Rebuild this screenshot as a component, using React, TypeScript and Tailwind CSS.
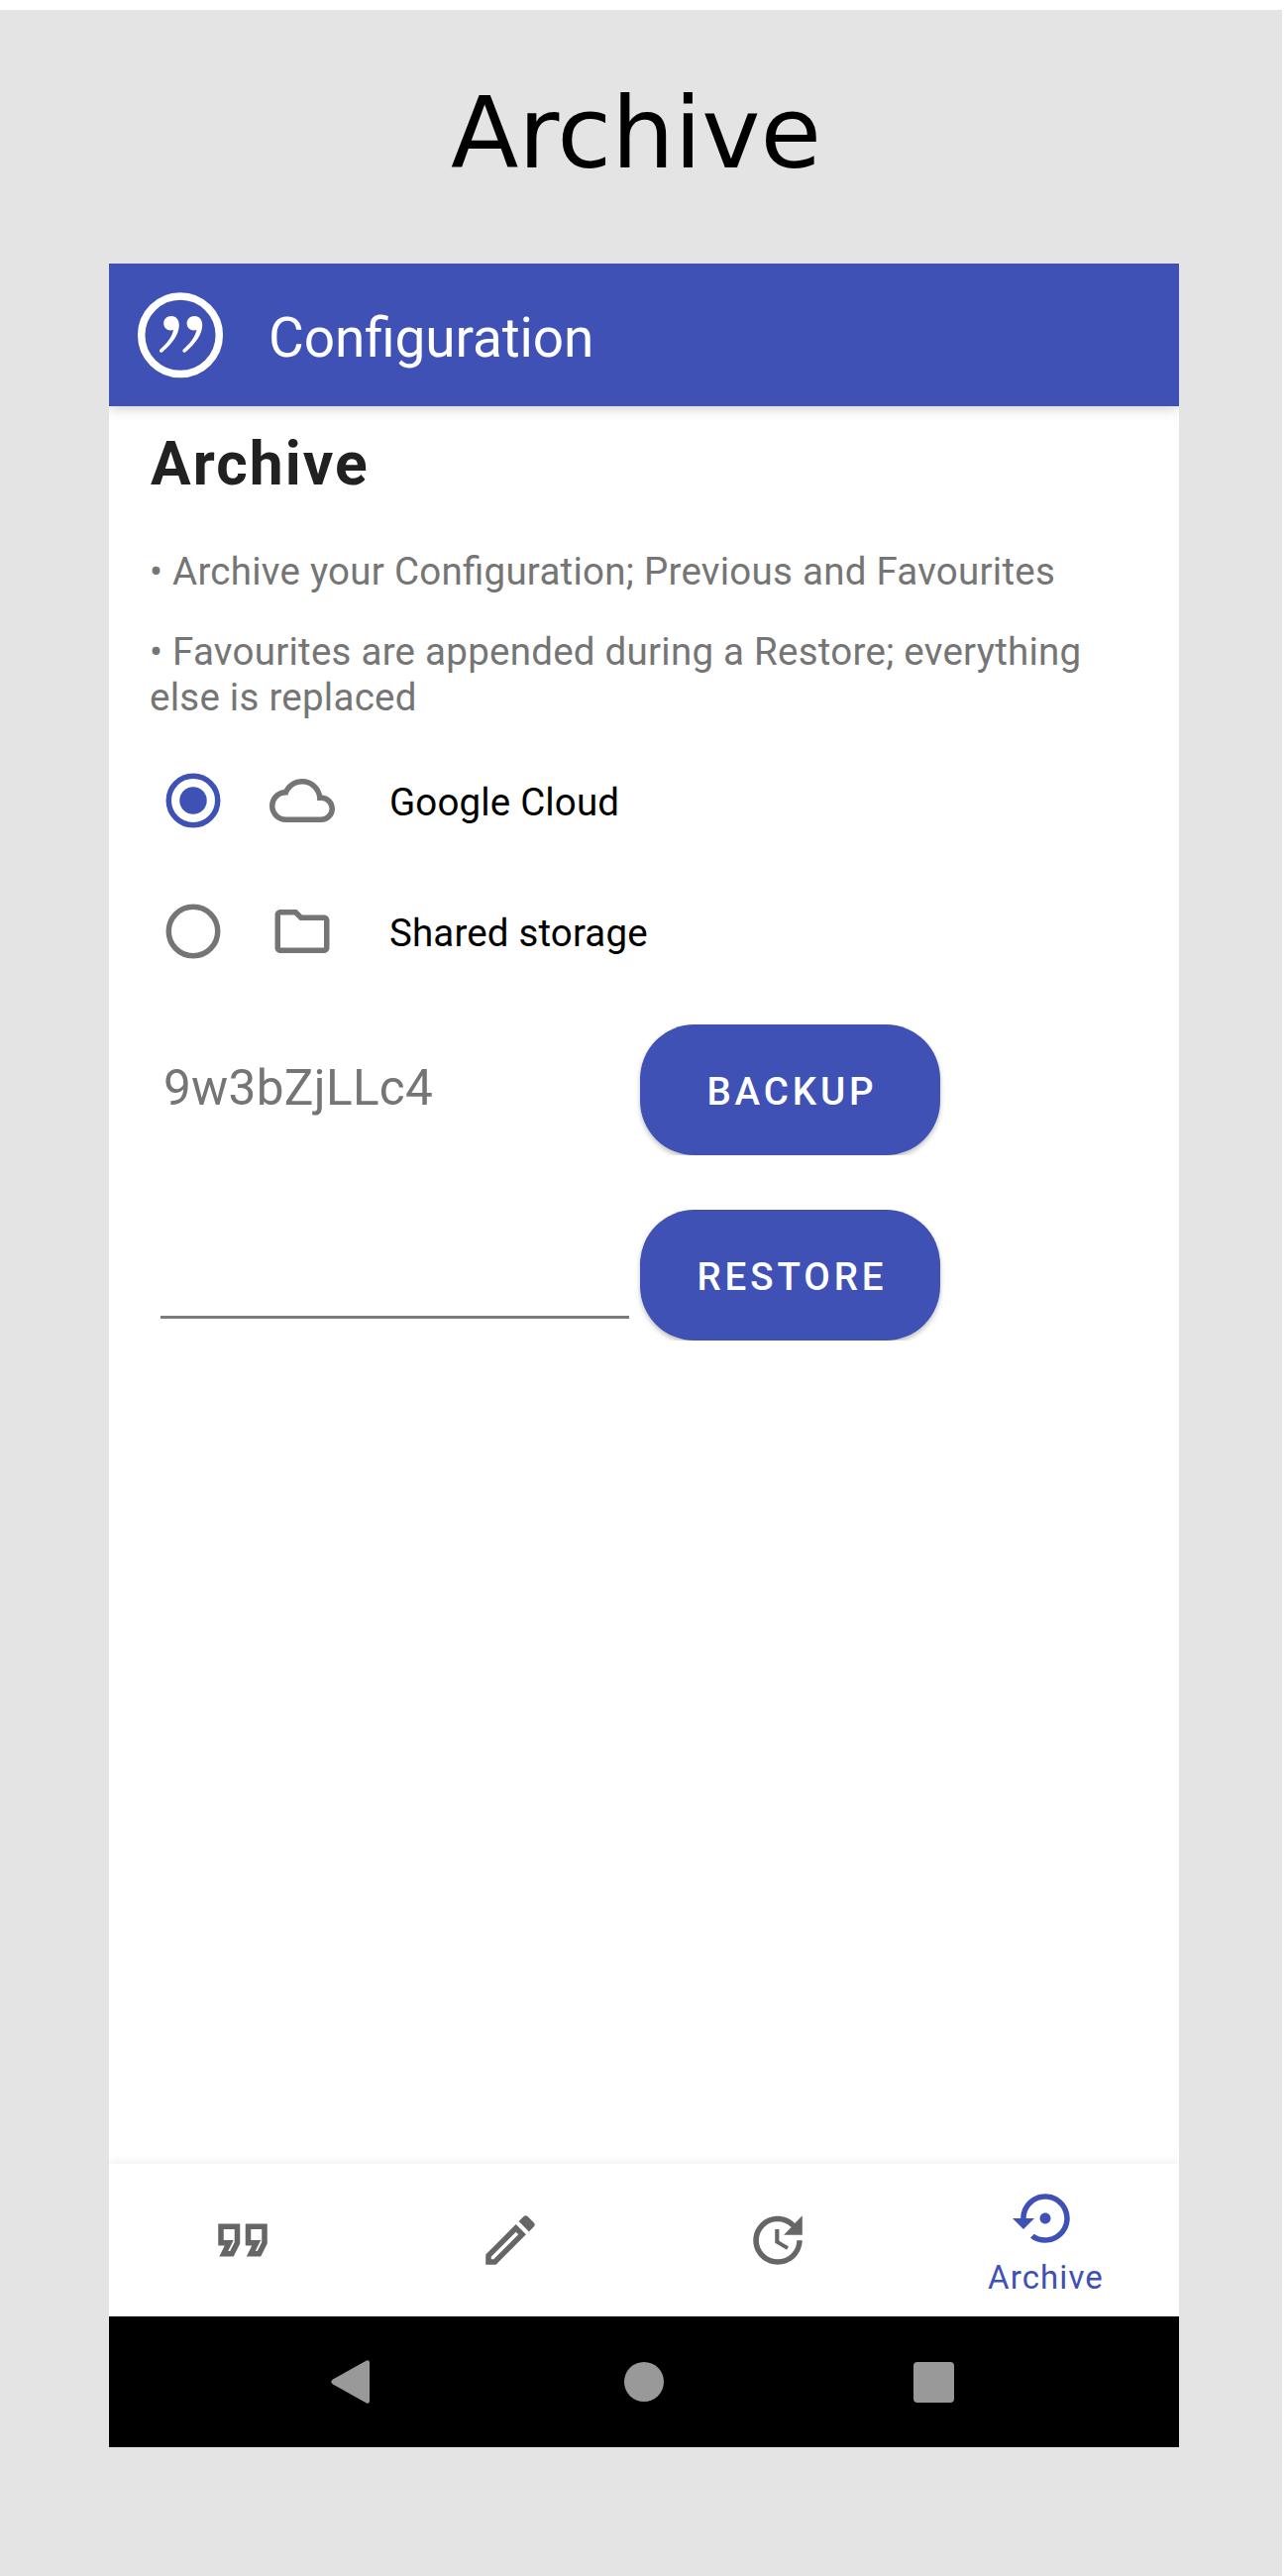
import React from "react";

const PATHS = {
  cloud:
    "M19,18H6A4,4 0 0,1 2,14A4,4 0 0,1 6,10H6.71C7.37,7.69 9.5,6 12,6A5.5,5.5 0 0,1 17.5,11.5V12H19A3,3 0 0,1 22,15A3,3 0 0,1 19,18M19.35,10.03C18.67,6.59 15.64,4 12,4C9.11,4 6.6,5.64 5.35,8.03C2.34,8.36 0,10.9 0,14A6,6 0 0,0 6,20H19A5,5 0 0,0 24,15C24,12.36 21.95,10.22 19.35,10.03Z",
  folder:
    "M9.17 6l2 2H20v10H4V6h5.17M10 4H4c-1.1 0-1.99.9-1.99 2L2 18c0 1.1.9 2 2 2h16c1.1 0 2-.9 2-2V8c0-1.1-.9-2-2-2h-8l-2-2z",
  quote:
    "M18.62 18h-5.24l2-4H13V6h8v7.24L18.62 18zm-2-2h.76L19 12.76V8h-4v4h3.62l-2 4zm-8 2H3.38l2-4H3V6h8v7.24L8.62 18zm-2-2h.76L9 12.76V8H5v4h3.62l-2 4z",
  pencil:
    "M14.06,9L15,9.94L5.92,19H5V18.08L14.06,9M17.66,3C17.41,3 17.15,3.1 16.96,3.29L15.13,5.12L18.88,8.87L20.71,7.04C21.1,6.65 21.1,6 20.71,5.63L18.37,3.29C18.17,3.09 17.92,3 17.66,3M14.06,6.19L3,17.25V21H6.75L17.81,9.94L14.06,6.19Z",
  update:
    "M21,10.12H14.22L16.96,7.3C14.23,4.6 9.81,4.5 7.08,7.2C4.35,9.91 4.35,14.28 7.08,17C9.81,19.7 14.23,19.7 16.96,17C18.32,15.65 19,14.08 19,12.1H21C21,14.08 20.12,16.65 18.36,18.39C14.85,21.87 9.15,21.87 5.64,18.39C2.14,14.92 2.11,9.28 5.62,5.81C9.13,2.34 14.76,2.34 18.27,5.81L21,3V10.12M12.5,8V12.25L16,14.33L15.28,15.54L11,13V8H12.5Z",
  restore:
    "M14 12c0-1.1-.9-2-2-2s-2 .9-2 2 .9 2 2 2 2-.9 2-2zm-2-9c-4.97 0-9 4.03-9 9H0l4 4 4-4H5c0-3.87 3.13-7 7-7s7 3.13 7 7-3.13 7-7 7c-1.51 0-2.91-.49-4.06-1.3l-1.42 1.44C8.04 20.3 9.94 21 12 21c4.97 0 9-4.03 9-9s-4.03-9-9-9z",
};

function Icon({ name }: { name: keyof typeof PATHS }) {
  return (
    <svg viewBox="0 0 24 24" className="h-[66px] w-[66px] shrink-0" fill="currentColor" fillRule="evenodd">
      <path d={PATHS[name]} />
    </svg>
  );
}

const QUOTE_MARK =
  "M36 26C41 26 43.800 30 43.800 35C43.800 44 37 54 27 62.200C25 63.700 22.800 61.500 24.500 59.800C31 54 36.500 47.500 38 40C33 41.800 28.200 38.500 28.200 33.500C28.200 29 31.500 26 36 26Z";

function Logo() {
  return (
    <svg viewBox="0 0 90 90" className="h-[90px] w-[90px] shrink-0 blur-[0.7px]" fill="#fff">
      <circle cx="45" cy="45.300" r="39.300" fill="none" stroke="#fff" strokeWidth="7.500" />
      <path d={QUOTE_MARK} />
      <path d={QUOTE_MARK} transform="translate(23.400 0)" />
    </svg>
  );
}

function Radio({ checked }: { checked?: boolean }) {
  return (
    <svg
      viewBox="0 0 24 24"
      className={checked ? "h-[66px] w-[66px] shrink-0 text-[#3f51b5]" : "h-[66px] w-[66px] shrink-0 text-[#757575]"}
    >
      <circle cx="12" cy="12" r="9" fill="none" stroke="currentColor" strokeWidth="2" />
      {checked && <circle cx="12" cy="12" r="5" fill="currentColor" />}
    </svg>
  );
}

function Choice({ checked, icon, label }: { checked?: boolean; icon: "cloud" | "folder"; label: string }) {
  return (
    <div className="flex h-[132px] items-center pl-[52px]">
      <Radio checked={checked} />
      <div className="ml-[44px] text-[#757575]">
        <Icon name={icon} />
      </div>
      <span className="ml-[55px] pt-[3px] text-[38.500px] leading-[46px] tracking-[0.150px] text-black">{label}</span>
    </div>
  );
}

function Action({ label }: { label: string }) {
  return (
    <div className="-mx-2 overflow-hidden px-2">
      <button className="block h-[132px] w-[303px] rounded-[55px] bg-[#3f51b5] pt-[3px] pl-[4px] text-[38.500px] font-medium tracking-[3.900px] text-white shadow-[0_3px_5px_rgba(0,0,0,0.24)]">
        {label}
      </button>
    </div>
  );
}

export default function App() {
  return (
    <div className="h-[2600px] w-[1300px] bg-white pt-[10px] pr-[6px]">
      <div className="flex h-[2590px] flex-col bg-[#e4e4e4] pl-[110px]">
        <h1 className="flex h-[256px] w-[1064px] items-start justify-center pt-[67px] font-['DejaVu_Sans',sans-serif] text-[100px] leading-[116px] text-black">
          Archive
        </h1>
        <div className="flex h-[2204px] w-[1080px] flex-col overflow-hidden bg-white font-[Roboto,sans-serif] [font-feature-settings:'liga'_1]">
          <header className="relative flex h-[144px] shrink-0 items-start bg-[#3f51b5] pt-[27px] pl-[27px] text-white shadow-[0_2px_13px_rgba(0,0,0,0.2)]">
            <Logo />
            <span className="ml-[44px] pt-[16px] text-[55px] leading-[64px] tracking-[-0.120px]">Configuration</span>
          </header>
          <main className="flex-1">
            <h2 className="pt-[23px] pl-[42px] text-[60.500px] leading-[72px] font-bold tracking-[2px] text-[#212121]">
              Archive
            </h2>
            <div className="pl-[41px] text-[38.500px] leading-[46px] tracking-[0.250px] text-[#757575]">
              <p className="pt-[49px]">• Archive your Configuration; Previous and Favourites</p>
              <p className="w-[1000px] pt-[35px]">
                • Favourites are appended during a Restore; everything
                <br />
                else is replaced
              </p>
            </div>
            <div className="pt-[15px]">
              <Choice checked icon="cloud" label="Google Cloud" />
              <Choice icon="folder" label="Shared storage" />
            </div>
            <div className="mt-[28px] flex h-[187px] items-start">
              <div className="w-[536px] pt-[35px] pl-[55px] text-[49.500px] leading-[58px] tracking-[0.300px] text-[#757575]">
                9w3bZjLLc4
              </div>
              <Action label="BACKUP" />
            </div>
            <div className="flex items-start">
              <div className="mr-[11px] ml-[52px] h-[110px] w-[473px] border-b-[3px] border-[#7b7b7b]" />
              <Action label="RESTORE" />
            </div>
          </main>
          <nav className="grid h-[154px] shrink-0 grid-cols-4 bg-white text-[#666] shadow-[0_-1px_10px_rgba(0,0,0,0.08)]">
            <div className="flex items-center justify-center"><Icon name="quote" /></div>
            <div className="flex items-center justify-center"><Icon name="pencil" /></div>
            <div className="flex items-center justify-center"><Icon name="update" /></div>
            <div className="flex flex-col items-center pt-[22px] text-[#3f51b5]">
              <Icon name="restore" />
              <span className="mt-[7px] pl-px text-[33px] leading-[39px] tracking-[1.100px]">Archive</span>
            </div>
          </nav>
          <footer className="relative flex h-[132px] shrink-0 items-center bg-black pl-[222px] text-[#999]">
            <svg viewBox="0 0 44 48" className="h-[48px] w-[44px]" fill="currentColor">
              <path d="M37.500 2.800Q41 1 41 5V43Q41 47 37.500 45.200L4 26.500Q0.500 24 4 21.500Z" />
            </svg>
            <div className="ml-[254px] h-[40px] w-[40px] rounded-full bg-[#999]" />
            <div className="ml-[252px] h-[41px] w-[41px] rounded-[4px] bg-[#999]" />
          </footer>
        </div>
      </div>
    </div>
  );
}
